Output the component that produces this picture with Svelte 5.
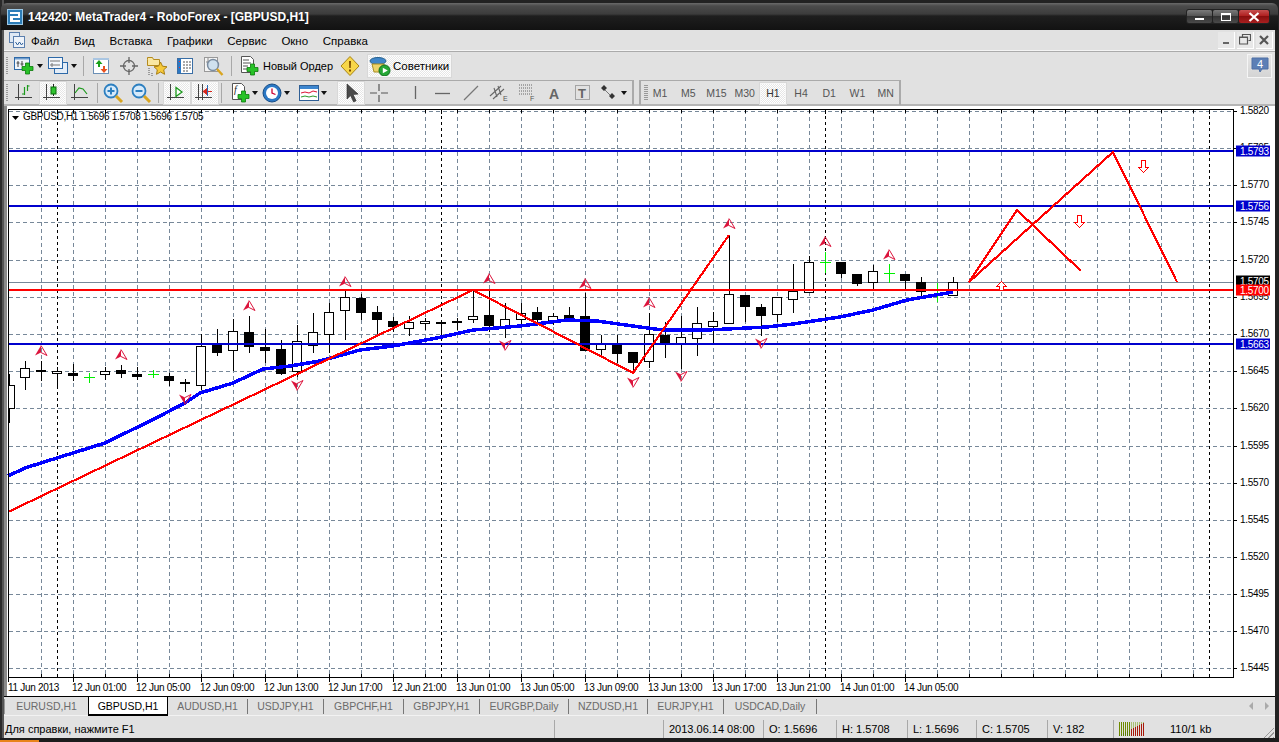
<script>
  const svg = (inner, w = 22, h = 22) => `<svg width="${w}" height="${h}" viewBox="0 0 ${w} ${h}" style="display:block">${inner}</svg>`;
  const plus = (x, y) => `<path d="M${x + 3.5} ${y}h4v3.500h3.500v4h-3.500v3.500h-4v-3.500h-3.500v-4h3.500z" fill="#27c227" stroke="#0b7a0b" stroke-width=".8"/>`;
  const axes = `<path d="M4.500 2v16M1 15.500h17" stroke="#444" fill="none" stroke-width="1"/>`;
  const lens = (c) => `<circle cx="9" cy="9" r="6.500" fill="#d6eafa" stroke="#2c7fc0" stroke-width="1.800"/><path d="M14 14l6 6" stroke="#d9a520" stroke-width="3"/>${c}`;
  const icons = {
    chart: svg(`<rect x="1.500" y="2.500" width="15" height="12" fill="#f0f5fb" stroke="#2d69a8"/><rect x="2" y="3" width="14" height="1.500" fill="#6f9ccc"/><path d="M5 6v6M3.500 8h3M9 6v5M7.500 9h3" stroke="#444"/>${plus(9, 8)}`),
    prof: svg(`<rect x="7.500" y="7.500" width="13" height="11" fill="#e4edf7" stroke="#2d69a8"/><rect x="1.500" y="2.500" width="14" height="11" fill="#f2f6fb" stroke="#2d69a8"/><path d="M3 6h10M5 8v4M3 10h10" stroke="#777"/>`),
    market: svg(`<rect x="3.500" y="3.500" width="15" height="15" fill="#fff" stroke="#6b8fb5"/><rect x="3" y="3" width="16" height="2" fill="#aac6e2"/><path d="M9 5l3.500 4H10v3H8V9H5.500z" fill="#19a019"/><path d="M14 18l-3.500-4H13v-3h2v3h2.500z" fill="#e8501e"/>`),
    cross: svg(`<circle cx="11" cy="11" r="5.500" fill="none" stroke="#666" stroke-width="1.300"/><path d="M11 2v6M11 14v6M2 11h6M14 11h6" stroke="#666" stroke-width="1.300"/>`),
    fav: svg(`<path d="M1.500 4.500v-2h5l1 2h6v6h-12z" fill="#f9e7a2" stroke="#b48a1e"/><path d="M14.500 7l2 4.200 4.500.6-3.300 3 .9 4.500-4.100-2.300-4 2.300.8-4.500-3.300-3 4.500-.6z" fill="#f6c93a" stroke="#a87e12"/><path d="M3 13v8M6 18v3" stroke="#555" stroke-dasharray="1 1"/>`),
    nav: svg(`<rect x="3.500" y="3.500" width="15" height="15" fill="#fff" stroke="#3a6ea5"/><rect x="4" y="4" width="3" height="14" fill="#2b78c5"/><path d="M5 6.500h1M5 12.500h1" stroke="#e33"/><path d="M9 7h8M9 10h8M9 13h8M9 16h6" stroke="#555" stroke-dasharray="2 1"/>`),
    tester: svg(`<rect x="2.500" y="2.500" width="13" height="14" fill="#f4f4f4" stroke="#999"/><path d="M6 3v9M4 7h4" stroke="#888"/><circle cx="11" cy="10" r="5.500" fill="#c6dcee" fill-opacity=".8" stroke="#7a8ca0" stroke-width="1.400"/><path d="M15 14l5.500 6" stroke="#d9a520" stroke-width="2.400"/>`),
    order: svg(`<path d="M3.500 1.500h9l3 3v13h-12z" fill="#fff" stroke="#555"/><path d="M5 5h6M5 8h8M5 11h5M5 14h4" stroke="#555"/>${plus(9, 9)}`),
    warn: svg(`<path d="M11 1.500l9 9.500-9 9.500-9-9.500z" fill="#f7d64a" stroke="#a88414"/><path d="M10 6h2l-.3 7h-1.400z M10 14.500h2v2h-2z" fill="#7a4a00"/>`),
    expert: svg(`<ellipse cx="9" cy="6" rx="8" ry="3.500" fill="#3f86c9" stroke="#25608f"/><path d="M3 9h12l1 8H5z" fill="#ecd36a" stroke="#a98d22"/><circle cx="15.500" cy="15.500" r="5.500" fill="#25a736" stroke="#0c6b1a"/><path d="M13.800 12.800l5 2.700-5 2.700z" fill="#fff"/>`),
    bars: svg(`${axes}<path d="M10.500 5v8M13.500 3v6M13.500 4h2M10.500 12H8" stroke="#1d9a1d" stroke-width="1.200" fill="none"/>`),
    candles: svg(`${axes}<path d="M11.500 2v12" stroke="#222"/><rect x="9" y="5" width="5" height="7" fill="#2fc42f" stroke="#0b6b0b"/>`),
    line: svg(`${axes}<path d="M5 11l4-5 4 1 4 5" stroke="#1d9a1d" fill="none" stroke-width="1.200"/>`),
    zin: svg(lens(`<path d="M5.500 9h7M9 5.500v7" stroke="#2c7fc0" stroke-width="2"/>`)),
    zout: svg(lens(`<path d="M5.500 9h7" stroke="#2c7fc0" stroke-width="2"/>`)),
    scroll: svg(`${axes}<path d="M10 5.500l6 4.500-6 4.500z" fill="#fff" stroke="#1d9a1d" stroke-width="1.300"/>`),
    shift: svg(`<path d="M4.500 2v16M8.500 2v16M1 15.500h17" stroke="#444" fill="none"/><path d="M18 9.500h-5M13 6.500l-4 3 4 3z" fill="#d8251a" stroke="#d8251a"/><path d="M13.500 3v11" stroke="#2a6bb5"/>`),
    indic: svg(`<path d="M3.500 1.500h9l3 3v13h-12z" fill="#fff" stroke="#555"/><text x="5" y="11" font-size="10" font-family="Liberation Serif" font-style="italic" fill="#222">f</text>${plus(9, 9)}`),
    clock: svg(`<circle cx="11" cy="11" r="9" fill="#2b78c5" stroke="#174d86"/><circle cx="11" cy="11" r="6" fill="#fff"/><path d="M11 6.500V11l3.500 1.500" stroke="#c03" fill="none" stroke-width="1.300"/>`),
    tmpl: svg(`<rect x="1.500" y="3.500" width="19" height="15" fill="#fff" stroke="#2f5f95"/><rect x="2" y="4" width="18" height="3" fill="#3d86cf"/><path d="M3 11l4-1 4 1 4-2 4 1" stroke="#d13" fill="none"/><path d="M3 15l4-1 4 1 4-1 4 1" stroke="#2a9a2a" fill="none"/>`),
    cursor: svg(`<path d="M7 2l0 15 3.600-3.400 3 6.400 2.500-1.200-3-6.200 5-.5z" fill="#4a4a4a" stroke="#2a2a2a" stroke-width=".6"/>`),
    crossh: svg(`<path d="M11 2v7M11 13v7M2 11h7M13 11h7" stroke="#555" stroke-width="1.200"/>`),
    vline: svg(`<path d="M11.500 4v13" stroke="#666" stroke-width="1.300"/>`),
    hline: svg(`<path d="M3 11.500h15" stroke="#666" stroke-width="1.300"/>`),
    trend: svg(`<path d="M4 18L18 4" stroke="#777" stroke-width="1.300"/>`),
    chan: svg(`<path d="M2 14L13 4M5 17L16 7M6 6l3 9M10 4l3 9" stroke="#666" stroke-width="1.100"/><text x="15" y="19" font-size="7" font-family="Liberation Sans" fill="#555">E</text>`),
    fibo: svg(`<path d="M3 3h14M3 6h14M3 9h14M3 12h14" stroke="#666" stroke-dasharray="1 1"/><text x="14" y="19" font-size="7" font-family="Liberation Sans" fill="#555">F</text>`),
    atext: svg(`<text x="5" y="17" font-size="14" font-weight="700" font-family="Liberation Sans" fill="#666">A</text>`),
    tbox: svg(`<rect x="3.500" y="3.500" width="14" height="14" fill="none" stroke="#666" stroke-dasharray="1 1"/><text x="6" y="16" font-size="13" font-weight="700" font-family="Liberation Sans" fill="#666">T</text>`),
    arrows: svg(`<path d="M6 3l3 3-3 3-3-3z M14 11l3 3-3 3-3-3z" fill="#333"/><path d="M7 8l5 5" stroke="#777"/>`)
  };

  const row1 = [
    { w: 'w36', i: 'chart', caret: 1 }, { w: 'w36', i: 'prof', caret: 1 }, { sep: 's1' },
    { w: 'w28', i: 'market' }, { w: 'w28', i: 'cross' }, { w: 'w28', i: 'fav' }, { w: 'w28', i: 'nav' }, { w: 'w28', i: 'tester' }, { sep: 's1' }
  ];
  const row2a = [
    { w: 'w28', i: 'bars' }, { w: 'w28', i: 'candles', on: 1 }, { w: 'w28', i: 'line' }, { sep: 's2' },
    { w: 'w28', i: 'zin' }, { w: 'w28', i: 'zout' }, { sep: 's3' },
    { w: 'w28', i: 'scroll', on: 1 }, { w: 'w28', i: 'shift', on: 1 }, { sep: 's4' },
    { w: 'w32', i: 'indic', caret: 1 }, { w: 'w32', i: 'clock', caret: 1 }, { w: 'w32 ml5', i: 'tmpl', caret: 1 }
  ];
  const row2b = [
    { w: 'w28', i: 'cursor', on: 1 }, { w: 'w28', i: 'crossh' }, { sep: 'blank' },
    { w: 'w28', i: 'vline' }, { w: 'w28', i: 'hline' }, { w: 'w28', i: 'trend' }, { w: 'w28', i: 'chan' },
    { w: 'w28', i: 'fibo' }, { w: 'w28', i: 'atext' }, { w: 'w28', i: 'tbox' }, { w: 'w32', i: 'arrows', caret: 1 }
  ];
  const periods = ['M1', 'M5', 'M15', 'M30', 'H1', 'H4', 'D1', 'W1', 'MN'];
  const menu = ['Файл', 'Вид', 'Вставка', 'Графики', 'Сервис', 'Окно', 'Справка'];
  const tabs = [
    ['EURUSD,H1', 'a'], ['GBPUSD,H1', 'b'], ['AUDUSD,H1', 'c'], ['USDJPY,H1', 'd'], ['GBPCHF,H1', 'c'],
    ['GBPJPY,H1', 'd'], ['EURGBP,Daily', 'e'], ['NZDUSD,H1', 'f'], ['EURJPY,H1', 'd'], ['USDCAD,Daily', 'g']
  ];
  const cells = [['', 'c2'], ['2013.06.14 08:00', 'c3'], ['O: 1.5696', 'c4'], ['H: 1.5708', 'c5'], ['L: 1.5696', 'c6'], ['C: 1.5705', 'c7'], ['V: 182', 'c8']];

  // [x, high, low, bodyTop, bodyBottom, kind]  w=white b=black c=cross
  const candles = [
    [9, 374, 423, 385, 408, 'w'], [25, 361, 390, 368, 377, 'w'], [41, 361, 381, 370, 371, 'b'], [57, 367, 388, 371, 373, 'w'],
    [73, 364, 381, 373, 375, 'b'], [89, 373, 383, 377, 377, 'c'], [105, 367, 380, 371, 374, 'w'], [121, 365, 378, 370, 373, 'b'],
    [137, 367, 380, 374, 376, 'b'], [153, 370, 378, 374, 374, 'c'], [169, 373, 386, 376, 380, 'b'], [185, 379, 392, 382, 383, 'b'],
    [201, 334, 390, 346, 385, 'w'], [217, 329, 356, 345, 352, 'b'], [233, 319, 371, 331, 350, 'w'], [249, 316, 353, 332, 346, 'b'],
    [265, 329, 363, 347, 350, 'b'], [281, 340, 375, 349, 373, 'b'], [297, 325, 377, 341, 371, 'w'], [313, 313, 353, 332, 345, 'w'],
    [329, 303, 353, 312, 334, 'w'], [345, 291, 340, 297, 310, 'w'], [361, 294, 320, 298, 312, 'b'], [377, 306, 335, 312, 319, 'b'],
    [393, 317, 332, 321, 326, 'b'], [409, 316, 336, 322, 328, 'w'], [425, 318, 330, 321, 323, 'w'], [441, 322, 335, 322, 323, 'b'],
    [457, 318, 330, 321, 322, 'b'], [473, 291, 323, 316, 319, 'w'], [489, 291, 332, 315, 325, 'b'], [505, 303, 338, 319, 327, 'w'],
    [521, 303, 327, 313, 319, 'w'], [537, 307, 323, 312, 319, 'b'], [553, 313, 325, 316, 322, 'w'], [569, 307, 322, 315, 319, 'b'],
    [585, 293, 351, 316, 350, 'b'], [601, 335, 357, 344, 349, 'w'], [617, 335, 363, 345, 353, 'b'], [633, 352, 373, 352, 362, 'b'],
    [649, 313, 368, 334, 361, 'w'], [665, 322, 358, 335, 342, 'b'], [681, 316, 369, 337, 344, 'w'], [697, 307, 356, 323, 338, 'w'],
    [713, 312, 343, 321, 326, 'w'], [729, 235, 324, 294, 323, 'w'], [745, 295, 322, 295, 306, 'b'], [761, 304, 336, 307, 315, 'b'],
    [777, 297, 322, 297, 314, 'w'], [793, 264, 313, 291, 299, 'w'], [809, 256, 293, 262, 292, 'w'], [825, 252, 273, 262, 262, 'c'],
    [841, 262, 278, 262, 273, 'b'], [857, 274, 286, 274, 283, 'b'], [873, 265, 290, 271, 282, 'w'], [889, 264, 283, 273, 273, 'c'],
    [905, 274, 290, 274, 280, 'b'], [921, 277, 296, 282, 291, 'b'], [937, 283, 302, 295, 295, 'c'], [953, 277, 296, 282, 295, 'w']
  ];
  const ma = '8,476 25,468 60,457 105,443 152,420 185,403 200,393 233,383 263,369 290,366 320,361 360,350 393,346 437,338 473,330 520,326 567,320 597,321 640,327 663,330 707,330 767,327 793,324 840,317 873,310 907,300 953,292';
  const ups = [[41, 351], [121, 355], [249, 306], [345, 282], [489, 279], [585, 284], [649, 303], [729, 224], [825, 242], [889, 255]];
  const downs = [[185, 399], [297, 385], [505, 345], [633, 382], [681, 376], [761, 343]];
  const priceGrid = [['1.5820', 111], ['1.5795', 148], ['1.5770', 185], ['1.5745', 222], ['1.5720', 260], ['1.5695', 297], ['1.5670', 334], ['1.5645', 371], ['1.5620', 408], ['1.5595', 446], ['1.5570', 483], ['1.5545', 520], ['1.5520', 557], ['1.5495', 594], ['1.5470', 631], ['1.5445', 668]];
  const vGrid = Array.from({ length: 37 }, (_, i) => 41 + i * 32).filter((x) => x < 1233);
  const days = [57, 441, 825, 1209];
  const dates = ['11 Jun 2013', '12 Jun 01:00', '12 Jun 05:00', '12 Jun 09:00', '12 Jun 13:00', '12 Jun 17:00', '12 Jun 21:00', '13 Jun 01:00', '13 Jun 05:00', '13 Jun 09:00', '13 Jun 13:00', '13 Jun 17:00', '13 Jun 21:00', '14 Jun 01:00', '14 Jun 05:00'];
  const labels = [['1.5793', 151, '#0000cd'], ['1.5756', 206, '#0000cd'], ['1.5705', 281, '#000'], ['1.5700', 290, '#f00'], ['1.5663', 344, '#0000cd']];
  const conn = Array.from({ length: 13 }, (_, i) => i);
</script>

{#snippet tool(b)}
  {#if b.sep}
    <span class={`sep ${b.sep}`}></span>
  {:else}
    <span class={`btn ${b.w} ${b.on ? 'on' : ''}`}>
      {@html icons[b.i]}
      {#if b.caret}<i class="caret"></i>{/if}
    </span>
  {/if}
{/snippet}

<div class="win">
  <header class="title">
    <svg class="logo" width="16" height="16" viewBox="0 0 16 16"><rect width="16" height="16" rx="1" fill="#2d7db8"/><rect x=".5" y=".5" width="15" height="15" fill="none" stroke="#9cc8e6"/><path d="M3 3h10v6H6v2h7v2H3V7h8V5H3z" fill="#fff"/></svg>
    <span class="ttext">142420: MetaTrader4 - RoboForex - [GBPUSD,H1]</span>
    <div class="caps">
      <span class="cap"><i class="c-min"></i></span>
      <span class="cap"><i class="c-max"></i></span>
      <span class="cap close"><svg width="12" height="10" viewBox="0 0 12 10"><path d="M1.500 1l9 8M10.500 1l-9 8" stroke="#fff" stroke-width="2.200"/></svg></span>
    </div>
  </header>

  <nav class="menu">
    <svg class="docicon" width="16" height="16" viewBox="0 0 16 16"><rect x=".5" y=".5" width="10" height="10" fill="#dfe9f5" stroke="#5b7fae"/><rect x="4.500" y="4.500" width="11" height="11" fill="#eef3fa" stroke="#5b7fae"/><path d="M6.500 10l2 3 2-3 2 3 1.500-2" stroke="#2d5f99" fill="none"/></svg>
    <div class="mitems">{#each menu as m}<span>{m}</span>{/each}</div>
    <div class="mdi">
      <span class="mb"><i class="m-min"></i></span>
      <span class="mb"><svg width="12" height="11" viewBox="0 0 12 11"><path d="M3.500 2.500v-2h8v6h-2M.5 3h8v7h-8z M.5 3.500h8" fill="none" stroke="#555" stroke-width="1.200"/></svg></span>
      <span class="mb"><svg width="10" height="10" viewBox="0 0 10 10"><path d="M1 1l8 8M9 1l-8 8" stroke="#555" stroke-width="2.200"/></svg></span>
    </div>
  </nav>

  <div class="bar bar1">
    <span class="vgrip"></span>
    {#each row1 as b}{@render tool(b)}{/each}
    <span class="btn wtext">{@html icons.order}<span class="lbl tight">Новый Ордер</span></span>
    <span class="btn w28 warn">{@html icons.warn}</span>
    <span class="btn on wexp">{@html icons.expert}<span class="lbl">Советники</span></span>
    <span class="chat">
      <svg width="18" height="18" viewBox="0 0 18 18"><path d="M1 1h16v11h-6l-2 3-1-3H1z" fill="#5c7fb5" stroke="#4f70a5"/><text x="9" y="10.500" text-anchor="middle" font-size="11" font-family="Liberation Sans" fill="#fff">4</text></svg>
    </span>
  </div>

  <div class="bar bar2">
    <div class="group g1"><span class="vgrip"></span>{#each row2a as b}{@render tool(b)}{/each}</div>
    <div class="group g2">{#each row2b as b}{@render tool(b)}{/each}</div>
    <div class="group g3">
      <span class="grip"></span>
      {#each periods as p}<span class={p === 'H1' ? 'per on' : 'per'}>{p}</span>{/each}
    </div>
  </div>

  <svg class="chart" width="1271" height="591" viewBox="4 106 1271 591">
    <rect x="4" y="106" width="1271" height="591" fill="#fff"/>
    <rect x="4" y="106" width="3" height="591" fill="#8a8a8a"/>
    <g stroke="#778899" stroke-dasharray="4 3" shape-rendering="crispEdges">
      {#each priceGrid as p}<line x1="9" x2="1233" y1={p[1] + 0.5} y2={p[1] + 0.5}/>{/each}
      {#each vGrid as x}<line x1={x + 0.5} x2={x + 0.5} y1="110" y2="677"/>{/each}
    </g>
    <g stroke="#000" stroke-dasharray="3 3" shape-rendering="crispEdges">
      {#each days as x}<line x1={x + 0.5} x2={x + 0.5} y1="110" y2="677"/>{/each}
    </g>
    <line x1="9" x2="1233" y1="282.500" y2="282.500" stroke="#778899" shape-rendering="crispEdges"/>
    <g shape-rendering="crispEdges">
      {#each candles as c}
        {#if c[5] === 'c'}
          <g stroke="#00f000">
            <line x1={c[0] + 0.5} x2={c[0] + 0.5} y1={c[1]} y2={c[2]}/>
            <line x1={c[0] - 5} x2={c[0] + 6} y1={c[3] + 0.5} y2={c[3] + 0.5}/>
          </g>
        {:else}
          <line x1={c[0] + 0.5} x2={c[0] + 0.5} y1={c[1]} y2={c[2]} stroke="#000"/>
          <rect x={Math.max(c[0] - 4.5, 8.5)} y={c[3] + 0.5} width={c[0] < 15 ? 6 : 9} height={c[4] - c[3]} fill={c[5] === 'b' ? '#000' : '#fff'} stroke="#000"/>
        {/if}
      {/each}
    </g>
    <g fill="none" shape-rendering="crispEdges">
      <line x1="9" x2="1233" y1="151" y2="151" stroke="#0000cd" stroke-width="2"/>
      <line x1="9" x2="1233" y1="206" y2="206" stroke="#0000cd" stroke-width="2"/>
      <line x1="9" x2="1233" y1="344" y2="344" stroke="#0000cd" stroke-width="2"/>
      <polyline points={ma} stroke="#00f" stroke-width="3.500"/>
      <line x1="9" x2="1233" y1="290" y2="290" stroke="#f00" stroke-width="2"/>
      <polyline points="8,512 473,290 633,373 729,235" stroke="#f00" stroke-width="2.200"/>
      <polyline points="969,282 1017,210 1081,271" stroke="#f00" stroke-width="2.200"/>
      <polyline points="969,282 1113,152 1177,282" stroke="#f00" stroke-width="2.200"/>
    </g>
    {#each ups as [x, y]}
      <g transform={`translate(${x} ${y})`}>
        <path d="M0 -5.500L-6 4.500L0 1.500z" fill="#dc143c"/>
        <path d="M0 -5.500L6 4.500L0 1.500" fill="none" stroke="#dc143c"/>
      </g>
    {/each}
    {#each downs as [x, y]}
      <g transform={`translate(${x} ${y})`}>
        <path d="M0 5.500L-6 -4.500L0 -1.500z" fill="#dc143c"/>
        <path d="M0 5.500L6 -4.500L0 -1.500" fill="none" stroke="#dc143c"/>
      </g>
    {/each}
    <g fill="#fff" stroke="#f00" stroke-width="1" shape-rendering="crispEdges">
      <path d="M1001.500 281.500l5 5h-3v4h-4v-4h-3z"/>
      <path d="M1079.500 227.500l5-5h-3v-7h-4v7h-3z"/>
      <path d="M1143.500 172.500l5-5h-3v-7h-4v7h-3z"/>
    </g>
    <g shape-rendering="crispEdges" fill="none" stroke="#000">
      <rect x="8.500" y="109.500" width="1225" height="567.500"/>
      {#each priceGrid as p}<line x1="1233" x2="1237" y1={p[1] + 0.5} y2={p[1] + 0.5}/>{/each}
      {#each vGrid as x}<line x1={x + 0.5} x2={x + 0.5} y1="110" y2="113"/><line x1={x + 0.5} x2={x + 0.5} y1="674" y2="677"/>{/each}
      {#each days as x}<line x1={x + 0.5} x2={x + 0.5} y1="110" y2="114"/>{/each}
      {#each dates as d, i}<line x1={9 + i * 64 - (i ? 0 : 1) + 0.5} x2={9 + i * 64 - (i ? 0 : 1) + 0.5} y1="677" y2="682"/>{/each}
    </g>
    <line x1="4" x2="1275" y1="696.500" y2="696.500" stroke="#000" shape-rendering="crispEdges"/>
    <path d="M12 116h7l-3.500 4z" fill="#000"/>
    <text class="ct" x="23" y="120">GBPUSD,H1 1.5696 1.5708 1.5696 1.5705</text>
    {#each priceGrid as p}<text class="ct" x="1240" y={p[1] + 3}>{p[0]}</text>{/each}
    {#each labels as l}
      <rect x="1236" y={l[1] - 5.500} width="34" height="11" fill={l[2]}/>
      <text class="ct wh" x="1240" y={l[1] + 4}>{l[0]}</text>
    {/each}
    {#each dates as d, i}<text class="ct" x={i ? 8 + i * 64 : 8} y="691">{d}</text>{/each}
  </svg>

  <div class="tabs">
    {#each tabs as t}<span class={`tab t${t[1]}`}>{t[0]}</span>{/each}
    <span class="nav"><i class="nl"></i><i class="nr"></i></span>
  </div>

  <footer class="status">
    <span class="cell cleft">Для справки, нажмите F1</span>
    {#each cells as c}<span class={`cell ${c[1]}`}>{c[0]}</span>{/each}
    <span class="cell c9">
      <svg width="26" height="14" viewBox="0 0 26 14">
        {#each conn as i}
          <rect x={i * 2} y={0} width="1" height="14" fill={i < 6 ? '#6e8a00' : '#a8c070'}/>
          <rect x={i * 2} y={13 - i} width="1" height={i + 1} fill={i < 6 ? '#5a7a00' : '#a81808'}/>
        {/each}
      </svg>
    </span>
    <span class="cell c10">110/1 kb</span>
    <span class="gripper"></span>
  </footer>
  <div class="edge"><span class="start"></span></div>
</div>

<style>
  :global(body) { margin: 0; background: #0c0c0c; overflow: hidden; }
  .win { width: 1279px; height: 742px; display: flex; flex-direction: column; box-sizing: border-box; padding-top: 3px; font: 11px "Liberation Sans", "Noto Sans", sans-serif; color: #000; background: linear-gradient(90deg, #2a2a2a 0 2px, #555 2px 4px, #222 4px); }
  .title { height: 27px; box-sizing: border-box; margin: 0 1px; display: flex; align-items: center; padding: 0 6px; border-radius: 6px 6px 0 0; background: linear-gradient(#6a6a6a 0, #4b4b4b 3px, #3c3c3c 11px, #1e1e1e 13px, #121212 27px); flex: none; }
  .logo { flex: none; }
  .ttext { margin-left: 5px; font: 700 12px "Liberation Sans", sans-serif; color: #fff; }
  .caps { margin-left: auto; margin-right: 2px; display: flex; gap: 1px; padding: 1px; background: #222; border-radius: 3px; }
  .cap { width: 25px; height: 13px; display: flex; align-items: center; justify-content: center; background: linear-gradient(#7a7a7a, #555 45%, #333 50%, #4a4a4a); border-radius: 2px; }
  .cap.close { width: 30px; background: linear-gradient(#c65050, #b02020 45%, #8a0e0e 50%, #a82020); }
  .c-min { display: block; width: 9px; height: 2px; background: #fff; margin-top: 5px; }
  .c-max { display: block; width: 8px; height: 5px; border: 1px solid #fff; border-top-width: 2px; }
  .menu { height: 21px; box-sizing: border-box; margin: 0 4px; padding: 0 2px 0 5px; flex: none; display: flex; align-items: center; background: #e1e1e1; border-bottom: 1px solid #f4f4f4; }
  .docicon { flex: none; }
  .mitems { display: flex; gap: 14.700px; margin-left: 6px; padding-top: 1px; font-size: 11.500px; }
  .mdi { margin-left: auto; display: flex; gap: 2px; }
  .mb { width: 16px; height: 16px; display: flex; align-items: center; justify-content: center; background: #e8e8e8; border-right: 1px solid #fff; border-bottom: 1px solid #fff; }
  .m-min { display: block; width: 6px; height: 2px; background: #666; margin-top: 6px; }
  .bar { margin: 0 4px; flex: none; display: flex; align-items: center; background: #e1e1e1; }
  .bar1 { height: 28px; padding-left: 2px; border-top: 1px solid #aaa; box-sizing: border-box; }
  .bar2 { height: 27px; box-sizing: border-box; align-items: stretch; border-bottom: 2px solid #b5b5b5; padding-top: 1px; }
  .vgrip { width: 2px; height: 18px; margin-right: 3px; flex: none; background: repeating-linear-gradient(#999 0 1px, transparent 1px 2px); }
  .group { display: flex; align-items: center; height: 25px; box-sizing: border-box; border-right: 2px solid #aaa; }
  .g1 { padding-left: 2px; width: 327px; box-sizing: border-box; border-top: 1px solid #aaa; border-right: 0; }
  .g2 { width: 303px; padding-left: 6px; border-top: 1px solid #aaa; box-sizing: border-box; }
  .g3 { width: 262px; padding-left: 3px; margin-left: 5px; border-top: 1px solid #aaa; border-left: 2px solid #aaa; box-sizing: border-box; }
  .btn { height: 24px; box-sizing: border-box; display: flex; align-items: center; justify-content: center; flex: none; position: relative; }
  .w28 { width: 28px; }
  .w32 { width: 32px; padding-right: 8px; }
  .ml5 { margin-left: 5px; }
  .w36 { width: 34px; padding-right: 8px; }
  .wtext { width: 101px; justify-content: flex-start; padding-left: 3px; gap: 3px; }
  .warn { margin-right: 3px; }
  .wexp { width: 85px; justify-content: flex-start; padding-left: 2px; gap: 2px; }
  .lbl { font-size: 11.500px; white-space: nowrap; }
  .tight { font-size: 11px; }
  .on { background: repeating-conic-gradient(#fff 0 25%, #e6e6e6 0 50%) 0 0 / 2px 2px; box-shadow: inset 0 0 0 1px #d8d8d8; outline: 1px solid #f7f7f7; outline-offset: -2px; }
  .caret { position: absolute; right: 2px; top: 10px; width: 0; height: 0; border: 3.500px solid transparent; border-top: 4px solid #111; border-bottom: 0; }
  .sep { width: 1px; height: 20px; background: #a8a8a8; flex: none; }
  .s1 { margin: 0 3px 0 4px; }
  .s2 { margin: 0 1px 0 2px; }
  .s3 { margin: 0 4px 0 3px; }
  .s4 { margin: 0 6px 0 2px; }
  .blank { background: transparent; width: 2px; margin: 0 3px; }
  .chat { margin-left: auto; margin-right: 3px; width: 25px; height: 24px; display: flex; align-items: center; justify-content: center; background: linear-gradient(#e6e6e6, #d4d4d4); border: 1px solid #f5f5f5; box-sizing: border-box; }
  .grip { width: 4px; height: 16px; margin-right: -2px; flex: none; background: repeating-linear-gradient(#999 0 1px, transparent 1px 2px); }
  .per { width: 28.200px; height: 23px; display: flex; align-items: center; justify-content: center; font-size: 10.500px; color: #555; box-sizing: border-box; flex: none; }
  .per.on { color: #333; }
  .chart { display: block; margin: 0 4px; flex: none; }
  .ct { font: 10px "Liberation Sans", sans-serif; letter-spacing: -.3px; fill: #000; }
  .wh { fill: #fff; }
  .tabs { height: 19px; box-sizing: border-box; margin: 0 4px; flex: none; display: flex; align-items: center; background: #e1e1e1; border-bottom: 1px solid #f2f2f2; font-size: 10.500px; color: #6b6b6b; }
  .tab { height: 15px; display: flex; align-items: center; justify-content: center; box-sizing: border-box; border-right: 1px solid #777; flex: none; }
  .ta { width: 84px; border-left: 1px solid #999; border-right: 0; }
  .tb { width: 80px; height: 19px; background: #fff; color: #000; border: 1px solid #000; border-top: 0; border-bottom-width: 2px; align-self: flex-start; }
  .tc { width: 80px; }
  .td { width: 76px; }
  .te { width: 89px; }
  .tf { width: 79px; }
  .tg { width: 93px; }
  .nav { margin-left: auto; margin-right: 6px; display: flex; gap: 12px; }
  .nav i { display: block; width: 0; height: 0; border: 4px solid transparent; }
  .nl { border-right-color: #aaa !important; border-left-width: 0 !important; }
  .nr { border-left-color: #aaa !important; border-right-width: 0 !important; }
  .status { height: 22px; box-sizing: border-box; padding-top: 3px; margin: 0 4px; flex: none; display: flex; align-items: center; background: #e1e1e1; position: relative; }
  .cell { height: 18px; display: flex; align-items: center; box-sizing: border-box; padding-left: 5px; border-right: 1px solid #a8a8a8; flex: none; }
  .cleft { width: 551px; padding-left: 1px; }
  .c2 { width: 109px; }
  .c3 { width: 100px; }
  .c4 { width: 73px; }
  .c5 { width: 71px; }
  .c6 { width: 69px; }
  .c7 { width: 71px; }
  .c8 { width: 66px; }
  .c9 { width: 51px; border: 0; }
  .c10 { border: 0; }
  .gripper { position: absolute; right: 1px; bottom: 0; width: 13px; height: 13px; background: repeating-linear-gradient(135deg, transparent 0 2px, #999 2px 3px); clip-path: polygon(100% 0, 100% 100%, 0 100%); }
  .edge { flex: 1; background: #1c1c1c; display: flex; align-items: flex-end; }
  .start { width: 39px; height: 2px; background: #e8841c; }
</style>
